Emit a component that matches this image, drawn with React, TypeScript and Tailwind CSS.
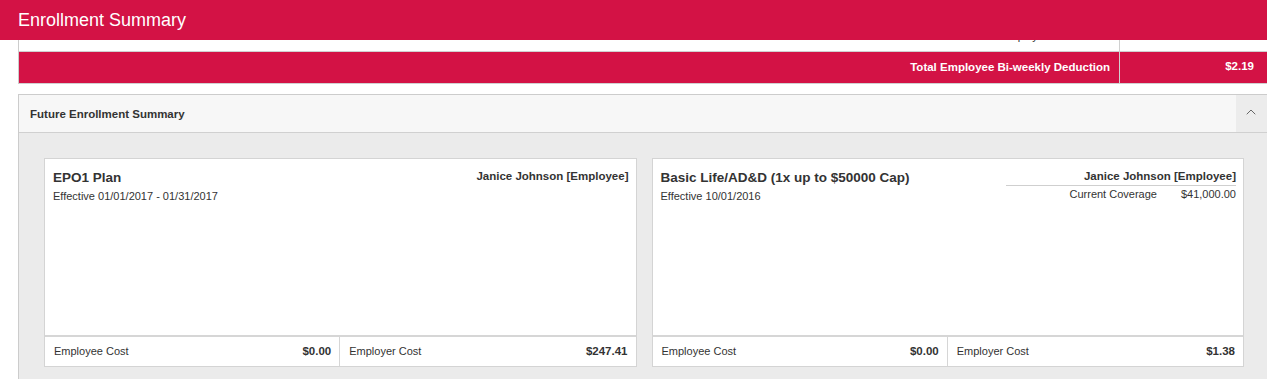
import { ChevronUp } from "lucide-react";

const red = "bg-[#d31245]";

type Cost = { label: string; value: string };

function CostCell({ label, value, last }: Cost & { last?: boolean }) {
  return (
    <div
      className={`flex items-center justify-between h-[29px] pl-[9px] pr-[8px] ${
        last ? "" : "border-r border-[#d6d6d6]"
      }`}
    >
      <span className="text-[11px] text-[#333]">{label}</span>
      <span className="text-[11.5px] font-bold text-[#333]">{value}</span>
    </div>
  );
}

function PlanCard({
  title,
  effective,
  member,
  coverage,
  employee,
  employer,
}: {
  title: string;
  effective: string;
  member: string;
  coverage?: string;
  employee: string;
  employer: string;
}) {
  return (
    <div className="bg-white border border-[#d4d4d4] flex flex-col h-[209px]">
      <div className="flex-1 flex justify-between pt-[11px] pl-[8px] pr-[7px]">
        <div>
          <div className="text-[13.5px] font-bold text-[#333] leading-[16px]">{title}</div>
          <div className="text-[11px] text-[#333] leading-[14px] mt-[3px]">{effective}</div>
        </div>
        <div className="w-[230px] text-right">
          <div
            className={`text-[11.5px] font-bold text-[#333] leading-[14px] -mt-[1px] ${
              coverage ? "border-b border-[#cfcfcf] pb-[2px]" : ""
            }`}
          >
            {member}
          </div>
          {coverage && (
            <div className="flex justify-end gap-[24px] text-[11px] text-[#333] leading-[13px] mt-[2px]">
              <span>Current Coverage</span>
              <span>{coverage}</span>
            </div>
          )}
        </div>
      </div>
      <div className="grid grid-cols-2 border-t-2 border-[#d6d6d6]">
        <CostCell label="Employee Cost" value={employee} />
        <CostCell label="Employer Cost" value={employer} last />
      </div>
    </div>
  );
}

export default function App() {
  return (
    <div className="w-[1267px] h-[379px] overflow-hidden bg-white font-['Liberation_Sans',Arial,sans-serif]">
      <header className={`h-10 ${red} flex items-center pl-[18px]`}>
        <h1 className="text-white text-[18px] leading-none">Enrollment Summary</h1>
      </header>

      <div className="pl-[18px]">
        {/* deductions table, scrolled under header */}
        <div className="border-l border-[#cccccc]">
          <div className="flex h-[12px] border-b border-[#d0d0d0]">
            <div className="flex-1 overflow-hidden">
              <div className="-mt-[11px] text-right pr-[9px] text-[11px] leading-[14px] text-[#333]">
                Employer Contribution
              </div>
            </div>
            <div className="w-[148px] border-l border-[#d0d0d0]" />
          </div>
          <div className={`flex h-[32px] ${red} border-b border-[#d0d0d0]`}>
            <div className="flex-1 flex items-center justify-end pr-[9px] pt-[1px] text-[11.5px] font-bold text-white">
              Total Employee Bi-weekly Deduction
            </div>
            <div className="w-[148px] border-l border-[#d0d0d0] text-right pr-[13px] pt-[6px] text-[11.5px] font-bold text-white">
              $2.19
            </div>
          </div>
        </div>

        <div className="h-[10px]" />

        {/* accordion */}
        <div className="border-l border-t border-[#cccccc]">
          <div className="flex h-[38px] bg-[#f7f7f7] border-b border-[#d0d0d0]">
            <div className="flex-1 flex items-center pl-[11px] pt-[2px] text-[11.5px] font-bold text-[#333]">
              Future Enrollment Summary
            </div>
            <div className="w-[31px] bg-[#ececec] flex items-center justify-center pb-[3px] pr-[1px]">
              <ChevronUp size={16} strokeWidth={1.5} className="text-[#666]" />
            </div>
          </div>
          <div className="bg-[#ebebeb] pt-[25px] pl-[25px] pr-[23px] pb-[20px] grid grid-cols-2 gap-[15px]">
            <PlanCard
              title="EPO1 Plan"
              effective="Effective 01/01/2017 - 01/31/2017"
              member="Janice Johnson [Employee]"
              employee="$0.00"
              employer="$247.41"
            />
            <PlanCard
              title="Basic Life/AD&D (1x up to $50000 Cap)"
              effective="Effective 10/01/2016"
              member="Janice Johnson [Employee]"
              coverage="$41,000.00"
              employee="$0.00"
              employer="$1.38"
            />
          </div>
        </div>
      </div>
    </div>
  );
}
